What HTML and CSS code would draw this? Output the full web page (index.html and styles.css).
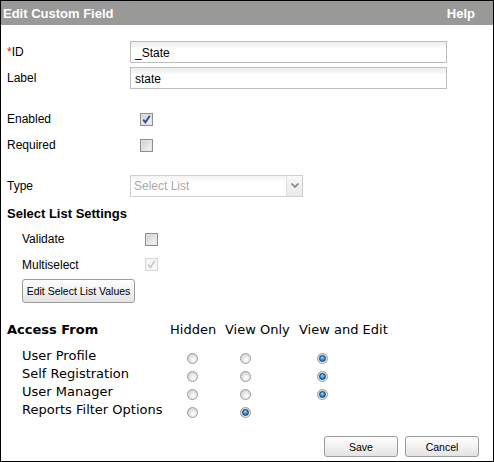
FILE: index.html
```html
<!DOCTYPE html>
<html>
<head>
<meta charset="utf-8">
<link rel="stylesheet" href="styles.css">
</head>
<body>
<div class="dialog">
  <div class="titlebar"><span>Edit Custom Field</span><span>Help</span></div>
  <div class="content">
    <div class="row field-row"><span class="lbl"><span class="req">*</span>ID</span><div class="text">_State</div></div>
    <div class="row field-row label-row"><span class="lbl">Label</span><div class="text">state</div></div>
    <div class="row check-row enabled-row"><span class="lbl">Enabled</span><span class="cb-wrap"><span class="cb"><svg viewBox="0 0 13 13" width="13" height="13"><path d="M3.2 6.6 L5.4 9.4 L9.8 2.8" fill="none" stroke="#2e4ea6" stroke-width="1.9"/></svg></span></span></div>
    <div class="row check-row"><span class="lbl">Required</span><span class="cb-wrap"><span class="cb"></span></span></div>
    <div class="row field-row type-row"><span class="lbl">Type</span>
      <div class="select"><span class="select-text">Select List</span><span class="select-btn"><svg viewBox="0 0 8 5" width="8" height="5"><path d="M0.5 0.5 L4 4 L7.5 0.5" fill="none" stroke="#8a8a8a" stroke-width="1.8"/></svg></span></div>
    </div>
    <div class="row section-title">Select List Settings</div>
    <div class="row check-row sub validate-row"><span class="lbl">Validate</span><span class="cb"></span></div>
    <div class="row check-row sub multi-row"><span class="lbl">Multiselect</span><span class="cb disabled"><svg viewBox="0 0 13 13" width="13" height="13"><path d="M3.2 6.6 L5.4 9.4 L9.8 2.8" fill="none" stroke="#c9c9c9" stroke-width="1.6"/></svg></span></div>
    <div class="sub btn-row"><button class="btn btn-edit">Edit Select List Values</button></div>
    <div class="access">
      <div class="ahead">Access From</div><div class="chead">Hidden</div><div class="chead">View Only</div><div class="chead">View and Edit</div>
      <div class="aname">User Profile</div><div class="rc c1"><span class="radio"></span></div><div class="rc c2"><span class="radio"></span></div><div class="rc c3"><span class="radio on"></span></div>
      <div class="aname">Self Registration</div><div class="rc c1"><span class="radio"></span></div><div class="rc c2"><span class="radio"></span></div><div class="rc c3"><span class="radio on"></span></div>
      <div class="aname">User Manager</div><div class="rc c1"><span class="radio"></span></div><div class="rc c2"><span class="radio"></span></div><div class="rc c3"><span class="radio on"></span></div>
      <div class="aname">Reports Filter Options</div><div class="rc c1"><span class="radio"></span></div><div class="rc c2"><span class="radio on"></span></div><div class="rc c3"></div>
    </div>
    <div class="actions"><button class="btn btn-act">Save</button><button class="btn btn-act">Cancel</button></div>
  </div>
</div>
</body>
</html>
```

FILE: styles.css
```css
html, body {
  margin: 0;
  padding: 0;
  background: #fff;
}
.dialog {
  width: 494px;
  height: 462px;
  box-sizing: border-box;
  border: 1px solid #000;
  font-family: "Liberation Sans", Arial, sans-serif;
  font-size: 12px;
  color: #000;
  overflow: hidden;
}
.titlebar {
  height: 24px;
  background: #999998;
  color: #fff;
  font-weight: bold;
  font-size: 13px;
  display: flex;
  justify-content: space-between;
  align-items: center;
  padding: 1px 18px 0 2px;
  box-sizing: border-box;
}
.content {
  padding: 16px 0 0 6px;
}
.row {
  display: flex;
  align-items: center;
}
.lbl {
  width: 123px;
  flex: none;
}
.req {
  color: #e0101a;
}
.field-row {
  height: 22px;
}
.label-row {
  margin-top: 4px;
}
.text {
  width: 317px;
  height: 22px;
  box-sizing: border-box;
  border: 1px solid #bdbdbd;
  background: linear-gradient(#eeeeee, #f6f6f6 5px, #ffffff 6px);
  padding: 4px 0 0 4px;
  font-size: 12px;
  line-height: 14px;
}
.check-row {
  height: 26px;
}
.enabled-row {
  margin-top: 17px;
}
.cb-wrap {
  padding-left: 10px;
  display: flex;
}
.cb {
  width: 13px;
  height: 13px;
  box-sizing: border-box;
  border: 1px solid #8e8e8e;
  background: linear-gradient(135deg, #cfcfcf, #f7f7f7);
  box-shadow: inset 0 0 0 1px #e4e4e4;
  display: block;
  position: relative;
}
.cb svg {
  display: block;
  margin: -1px 0 0 -1px;
}
.cb.disabled {
  border-color: #d6d6d6;
  background: #f6f6f6;
  box-shadow: none;
}
.type-row {
  margin-top: 17px;
}
.select {
  width: 173px;
  height: 22px;
  box-sizing: border-box;
  border: 1px solid #cfcfcf;
  display: flex;
  background: linear-gradient(#f3f3f3, #ffffff 7px);
}
.select-text {
  flex: 1;
  color: #a9a9a9;
  padding: 3px 0 0 3px;
}
.select-btn {
  width: 16px;
  border-left: 1px solid #dedede;
  background: linear-gradient(#f8f8f8, #e9e9e9);
  display: flex;
  align-items: center;
  justify-content: center;
  padding-bottom: 2px;
  box-sizing: border-box;
}
.select-btn svg {
  display: block;
}
.section-title {
  margin-top: 3px;
  height: 26px;
  font-weight: bold;
  font-size: 13px;
}
.sub {
  padding-left: 15px;
}
.sub .lbl {
  width: 123px;
}
.multi-row {
  height: 25px;
}
.btn-row {
  margin-top: 2px;
  display: flex;
}
.btn {
  font-family: "Liberation Sans", Arial, sans-serif;
  font-size: 10.5px;
  color: #000;
  border: 1px solid #9c9c9c;
  border-radius: 3px;
  background: linear-gradient(#ffffff, #f1f1f1 50%, #e3e3e3);
  padding: 0;
  margin: 0;
}
.btn-edit {
  width: 113px;
  height: 24px;
}
.access {
  margin-top: 16px;
  display: grid;
  grid-template-columns: 163px 55px 74px 1fr;
  grid-template-rows: 20px 26px 18px 18px 18px;
  font-family: "DejaVu Sans", Verdana, sans-serif;
  font-size: 13px;
}
.ahead {
  font-weight: bold;
  align-self: center;
}
.chead {
  align-self: center;
}
.aname {
  padding-left: 15px;
  align-self: end;
  line-height: 18px;
}
.rc {
  display: flex;
  align-items: flex-end;
  padding-bottom: 1px;
}
.c1 { padding-left: 17px; }
.c2 { padding-left: 15px; }
.c3 { padding-left: 18px; }
.radio {
  width: 11px;
  height: 11px;
  box-sizing: border-box;
  border-radius: 50%;
  border: 1px solid #9c9c9c;
  background: radial-gradient(circle at 60% 65%, #ffffff 0, #e6e6e6 45%, #c2c2c2 100%);
  display: flex;
  align-items: center;
  justify-content: center;
}
.radio.on::after {
  content: "";
  width: 7px;
  height: 7px;
  box-sizing: border-box;
  border-radius: 50%;
  border: 1px solid #17375c;
  background: radial-gradient(circle at 45% 35%, #9fdcff 0, #3a93d8 45%, #1b5c9c 100%);
}
.actions {
  margin-top: 17px;
  display: flex;
  gap: 7px;
  padding-left: 317px;
}
.btn-act {
  width: 74px;
  height: 21px;
}
```
